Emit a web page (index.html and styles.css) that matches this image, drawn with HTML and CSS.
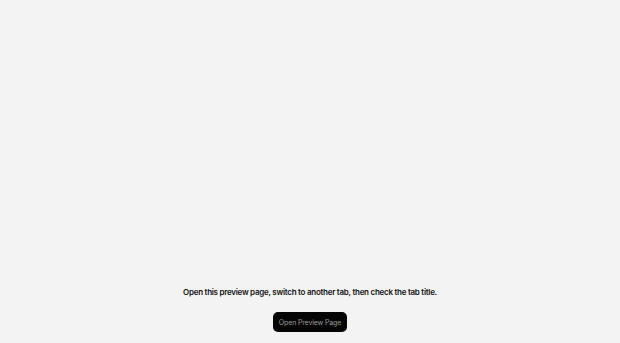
FILE: index.html
```html
<!DOCTYPE html>
<html>
<head>
<meta charset="utf-8">
<link rel="stylesheet" href="styles.css">
</head>
<body>
<main class="page">
  <p class="hint">Open this preview page, switch to another tab, then check the tab title.</p>
  <button class="open-btn">Open Preview Page</button>
</main>
</body>
</html>
```
FILE: styles.css
```css
html, body { margin: 0; padding: 0; }
body {
  background: #f3f3f3;
  font-family: Inter, "Liberation Sans", sans-serif;
  height: 343px;
  overflow: hidden;
}
.page {
  display: flex;
  flex-direction: column;
  align-items: center;
  padding-top: 286px;
}
.hint {
  margin: 0;
  font-size: 8px;
  font-weight: 600;
  letter-spacing: -0.26px;
  color: #111;
  line-height: 12px;
}
.open-btn {
  margin-top: 14px;
  height: 20px;
  padding: 0 6px;
  border: none;
  border-radius: 5px;
  background: #050505;
  color: #9a9a9a;
  font-family: Inter, "Liberation Sans", sans-serif;
  font-size: 7px;
  font-weight: 400;
  letter-spacing: -0.15px;
}
```
